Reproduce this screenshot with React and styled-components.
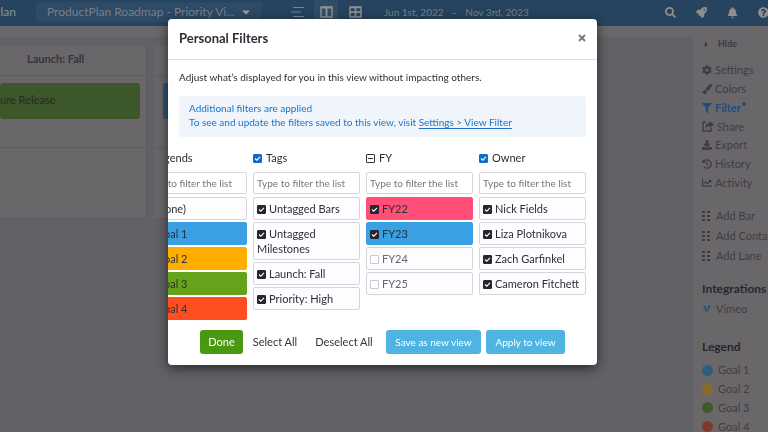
import React from "react";
import styled, { createGlobalStyle } from "styled-components";
import {
  FaSearch, FaRocket, FaBell, FaQuestionCircle, FaCog, FaPaintBrush, FaFilter,
  FaDownload, FaHistory, FaChartLine, FaCaretRight, FaCaretDown, FaVimeoV,
} from "react-icons/fa";

const Global = createGlobalStyle`
  * { box-sizing: border-box; }
  html, body, #root { height: 100%; }
  body { margin: 0; overflow: hidden; font-family: Lato, "Open Sans", sans-serif; font-size: 11px; line-height: 14px; color: #2d2f36; }
  button, input { font: inherit; color: inherit; }
  button { border: 0; background: none; padding: 0; cursor: pointer; }
  h1, h2, p, ul { margin: 0; padding: 0; font-size: inherit; }
  ul { list-style: none; }
`;
const Page = styled.div`
  height: 100%;
  display: flex;
  flex-direction: column;
  background: #6a676a;
  color: #35343a;
`;
const TopBar = styled.header`
  flex: none;
  height: 26px;
  padding-bottom: 2px;
  display: flex;
  align-items: center;
  background: #26435f;
  color: #77818a;
`;
const Brand = styled.a`
  width: 36px;
  padding-right: 20px;
  display: flex;
  justify-content: flex-end;
  color: #8b9197;
  text-decoration: none;
  font-size: 12px;
`;
const RoadmapPicker = styled.button`
  width: 226px;
  height: 20px;
  padding: 0 10px 0 11px;
  display: flex;
  align-items: center;
  justify-content: space-between;
  background: #2d4a66;
  border-radius: 2px;
  font-size: 12px;
  white-space: nowrap;
  svg { color: #9a9c9e; }
`;
const Views = styled.nav`
  display: flex;
  margin-left: 23px;
  gap: 5px;
`;
const ViewButton = styled.button`
  width: 24px;
  height: 24px;
  display: grid;
  place-items: center;
  border-radius: 2px;
  background: ${(p) => (p.$on ? "#304d68" : "transparent")};
`;
const Dates = styled.div`
  margin-left: 17px;
  display: flex;
  gap: 8px;
  font-size: 10px;
`;
const Tools = styled.div`
  margin-left: auto;
  display: flex;
  gap: 20px;
  margin-right: -1px;
  color: #918e8d;
`;
const IconButton = styled.button`
  display: flex;
`;
const Body = styled.div`
  flex: 1;
  min-height: 0;
  display: flex;
`;
const Canvas = styled.main`
  flex: 1;
  margin-top: 11px;
  padding-top: 9px;
  background: #626166;
  border-top-right-radius: 3px;
  display: flex;
  align-items: flex-start;
  gap: 8px;
`;
const Lane = styled.section`
  flex: 0 0 147px;
  background: #6a676a;
  border-right: 1px solid #5a595f;
`;
const LaneTitle = styled.h2`
  height: 30px;
  border-bottom: 1px solid #5e5d63;
  padding: 6px 0 0 27px;
  font-weight: 700;
`;
const LaneBody = styled.div`
  height: ${(p) => p.$height};
  padding-top: 7px;
  border-bottom: 1px solid #5e5d63;
`;
const Bar = styled.div`
  margin: 0 6px 0 ${(p) => p.$left || "0"};
  height: 36px;
  padding-top: 10px;
  border-radius: 3px;
  background: ${(p) => p.$color};
  color: #252c20;
`;
const Sidebar = styled.aside`
  width: 75px;
  padding: 11px 0 0 9px;
  display: flex;
  flex-direction: column;
  white-space: nowrap;
  overflow: hidden;
`;
const SideRow = styled.button`
  flex: 1;
  display: flex;
  align-items: center;
  gap: ${(p) => p.$gap || "3px"};
  font-weight: ${(p) => (p.$active ? 700 : 400)};
  color: ${(p) => (p.$active ? "#1f4e7c" : "#3f3d42")};
  svg { flex: none; }
`;
const HideButton = styled.button`
  height: 14px;
  display: flex;
  align-items: center;
  gap: 7px;
  font-size: 9px;
  font-weight: 700;
  color: #3c3a3f;
`;
const SideTitle = styled.h2`
  margin-top: ${(p) => p.$top};
  font-size: 12px;
  font-weight: 700;
  color: #27262b;
`;
const SideGroup = styled.div`
  flex: none;
  height: ${(p) => p.$height};
  margin-top: ${(p) => p.$top};
  display: flex;
  flex-direction: column;
`;
const Notice = styled.sup`
  width: 4px;
  height: 4px;
  margin: 0 0 7px -2px;
  border-radius: 50%;
  background: #1f4e7c;
`;
const Swatch = styled.i`
  width: 11px;
  height: 11px;
  border-radius: 50%;
  background: ${(p) => p.$color};
`;
const Overlay = styled.div`
  position: fixed;
  inset: 0;
  padding-top: 19px;
  display: flex;
  justify-content: center;
  align-items: flex-start;
`;
const Dialog = styled.div`
  width: 429px;
  margin-right: 3px;
  background: #fff;
  border-radius: 4px;
  overflow: hidden;
  box-shadow: 0 3px 12px rgba(0, 0, 0, 0.6);
`;
const DialogHead = styled.header`
  height: 41px;
  padding: 0 11px 2px;
  display: flex;
  align-items: center;
  justify-content: space-between;
  border-bottom: 1px solid #dddfe5;
`;
const DialogTitle = styled.h1`
  font-size: 13px;
  font-weight: 700;
`;
const Close = styled.button`
  display: flex;
  color: #77777b;
`;
const Intro = styled.p`
  padding: 10px 11px 12px;
  font-size: 10px;
`;
const Alert = styled.div`
  margin: 0 11px;
  padding: 5px 10px 8px;
  background: #f0f4fb;
  border-radius: 2px;
  font-size: 10px;
  color: #1d73c8;
  a { color: inherit; text-underline-offset: 2px; }
`;
const Columns = styled.div`
  height: 184px;
  margin-right: 11px;
  padding-top: 14px;
  display: flex;
  justify-content: flex-end;
  gap: 6px;
`;
const Column = styled.section`
  flex: 0 0 107px;
  display: flex;
  flex-direction: column;
  gap: 3px;
`;
const CheckLabel = styled.label`
  display: block;
  height: ${(p) => p.$height || "auto"};
`;
const Tick = styled.input`
  appearance: none;
  width: 9px;
  height: 9px;
  margin: 0 ${(p) => (p.$blue ? "4px" : "3px")} 0 0;
  vertical-align: -1px;
  border: 1px solid #c9cad1;
  border-radius: 1px;
  background: #fff center / 7px 7px no-repeat;
  &:checked {
    border-color: ${(p) => (p.$blue ? "#0d6ccc" : "#26272e")};
    background-color: ${(p) => (p.$blue ? "#0d6ccc" : "#26272e")};
    background-image: url("data:image/svg+xml,%3Csvg xmlns='http://www.w3.org/2000/svg' viewBox='0 0 7 7'%3E%3Cpath d='M1 3.5 2.8 5.2 6 1.8' fill='none' stroke='white' stroke-width='1.1'/%3E%3C/svg%3E");
  }
  &:indeterminate {
    border-color: #33343b;
    background-image: linear-gradient(#33343b, #33343b);
    background-size: 5px 1px;
  }
`;
const Search = styled.input`
  width: 100%;
  height: 22px;
  padding: 0 3px;
  border: 1px solid #d5d6dd;
  border-radius: 2px;
  background: #fff;
  font-size: 10px;
  &::placeholder { color: #77777d; opacity: 1; }
`;
const Options = styled.ul`
  display: flex;
  flex-direction: column;
  gap: 2px;
`;
const Option = styled.li`
  padding: 3px;
  border: 1px solid ${(p) => p.$color || "#d5d6dd"};
  border-radius: 2px;
  background: ${(p) => p.$color || "#fdfdff"};
  line-height: 15px;
  color: ${(p) => (p.$muted ? "#66666c" : "inherit")};
`;
const Actions = styled.footer`
  height: 44px;
  padding: 9px 0 0 32px;
  display: flex;
  align-items: flex-start;
`;
const Action = styled.button`
  height: 24px;
  width: ${(p) => p.$width};
  margin-left: ${(p) => p.$space || "0"};
  border-radius: 3px;
  white-space: nowrap;
  font-size: ${(p) => (p.$small ? "10px" : "11px")};
  background: ${(p) => p.$color || "transparent"};
  color: ${(p) => (p.$color ? "#fff" : "#33343b")};
`;

const ListIcon = () => (
  <svg width="13" height="10" stroke="#788590" fill="none"><path d="M2 .5h11M0 5h10M2 9.5h11" /></svg>
);
const BoardIcon = () => (
  <svg width="13" height="12" stroke="#918f8c" fill="none"><rect x="1" y="1" width="11" height="10" strokeWidth="1.5" /><path d="M1 1.5h11M6.5 2v9" strokeWidth="2" /></svg>
);
const TableIcon = () => (
  <svg width="13" height="12" stroke="#918f8c" fill="none"><rect x="1" y="1" width="11" height="10" strokeWidth="1.5" /><path d="M1 1.5h11M6.5 2v9M1 6.2h11" strokeWidth="1.7" /></svg>
);
const CloseIcon = () => (
  <svg width="8" height="8" stroke="currentColor" strokeWidth="1.8"><path d="M1 1l6 6M7 1L1 7" /></svg>
);
const ShareIcon = () => (
  <svg width="12" height="11" viewBox="0 0 12 11"><path d="M4 1H1v9h8V7" fill="none" stroke="currentColor" strokeWidth="1.4" /><path d="M7.5 0 12 3.5 7.5 7V5C5 5 4.5 6 4.4 8 2.6 5 4 2.2 7.5 2.2z" fill="currentColor" /></svg>
);
const GripIcon = () => (
  <svg width="8" height="10" fill="currentColor">
    {[0, 4, 8].map((y) => [0, 5].map((x) => <rect key={x + "-" + y} x={x} y={y} width="3" height="2" />))}
  </svg>
);

const setMixed = (mixed) => (el) => { if (el) el.indeterminate = !!mixed; };
const groups = [
  { name: "Legends", items: [["(none)"], ["Goal 1", "#38a0e3"], ["Goal 2", "#ffae00"], ["Goal 3", "#65a31b"], ["Goal 4", "#ff4e1f"]] },
  { name: "Tags", items: [["Untagged Bars"], ["Untagged Milestones"], ["Launch: Fall"], ["Priority: High"]] },
  { name: "FY", mixed: true, items: [["FY22", "#ff4e78"], ["FY23", "#38a0e3"], ["FY24", null, true], ["FY25", null, true]] },
  { name: "Owner", items: [["Nick Fields"], ["Liza Plotnikova"], ["Zach Garfinkel"], ["Cameron Fitchett"]] },
];
const menu = [
  [FaCog, "Settings"], [FaPaintBrush, "Colors"], [FaFilter, "Filter"], [ShareIcon, "Share"],
  [FaDownload, "Export"], [FaHistory, "History"], [FaChartLine, "Activity"],
];
const legend = [["Goal 1", "#2f5c7c"], ["Goal 2", "#8a6a24"], ["Goal 3", "#3f5a2b"], ["Goal 4", "#7f3a2c"]];

function FilterColumn({ group }) {
  return (
    <Column>
      <CheckLabel $height="18px">
        <Tick type="checkbox" $blue defaultChecked={!group.mixed} ref={setMixed(group.mixed)} />
        {group.name}
      </CheckLabel>
      <Search type="text" placeholder="Type to filter the list" aria-label={"Filter " + group.name} />
      <Options>
        {group.items.map(([label, color, off]) => (
          <Option key={label} $color={color} $muted={off}>
            <CheckLabel><Tick type="checkbox" defaultChecked={!off} />{label}</CheckLabel>
          </Option>
        ))}
      </Options>
    </Column>
  );
}

export default function App() {
  return (
    <>
      <Global />
      <Page>
        <TopBar>
          <Brand href="#">Plan</Brand>
          <RoadmapPicker>ProductPlan Roadmap - Priority Vi... <FaCaretDown /></RoadmapPicker>
          <Views>
            <ViewButton aria-label="List"><ListIcon /></ViewButton>
            <ViewButton aria-label="Board" $on><BoardIcon /></ViewButton>
            <ViewButton aria-label="Table"><TableIcon /></ViewButton>
          </Views>
          <Dates><span>Jun 1st, 2022</span><span>–</span><span>Nov 3rd, 2023</span></Dates>
          <Tools>
            <IconButton aria-label="Search"><FaSearch /></IconButton>
            <IconButton aria-label="News"><FaRocket /></IconButton>
            <IconButton aria-label="Alerts"><FaBell /></IconButton>
            <IconButton aria-label="Help"><FaQuestionCircle /></IconButton>
          </Tools>
        </TopBar>
        <Body>
          <Canvas>
            <Lane>
              <LaneTitle>Launch: Fall</LaneTitle>
              <LaneBody $height="72px"><Bar $color="#3c5729">ure Release</Bar></LaneBody>
              <LaneBody $height="71px" />
            </Lane>
            <Lane>
              <LaneTitle />
              <LaneBody $height="72px"><Bar $color="#2b5470" $left="8px" /></LaneBody>
              <LaneBody $height="71px" />
            </Lane>
          </Canvas>
          <Sidebar>
            <HideButton><FaCaretRight />Hide</HideButton>
            <SideGroup $top="10px" $height="131px">
              {menu.map(([Icon, label]) => (
                <SideRow key={label} $active={label === "Filter"}>
                  <Icon size={10} />{label}{label === "Filter" && <Notice />}
                </SideRow>
              ))}
            </SideGroup>
            <SideGroup $top="14px" $height="60px">
              {["Add Bar", "Add Container", "Add Lane"].map((t) => (
                <SideRow key={t} $gap="6px"><GripIcon />{t}</SideRow>
              ))}
            </SideGroup>
            <SideTitle $top="16px">Integrations</SideTitle>
            <SideGroup $top="3px" $height="19px">
              <SideRow $gap="5px"><FaVimeoV size={9} color="#255878" />Vimeo</SideRow>
            </SideGroup>
            <SideTitle $top="22px">Legend</SideTitle>
            <SideGroup $top="7px" $height="75px">
              {legend.map(([t, c]) => <SideRow key={t} $gap="5px"><Swatch $color={c} />{t}</SideRow>)}
            </SideGroup>
          </Sidebar>
        </Body>
      </Page>
      <Overlay>
        <Dialog role="dialog" aria-modal="true" aria-labelledby="filters-title">
          <DialogHead><DialogTitle id="filters-title">Personal Filters</DialogTitle><Close aria-label="Close"><CloseIcon /></Close></DialogHead>
          <Intro>Adjust what’s displayed for you in this view without impacting others.</Intro>
          <Alert>
            <p>Additional filters are applied</p>
            <p>To see and update the filters saved to this view, visit <a href="#">Settings &gt; View Filter</a></p>
          </Alert>
          <Columns>{groups.map((g) => <FilterColumn key={g.name} group={g} />)}</Columns>
          <Actions>
            <Action $color="#489810" $width="43px">Done</Action>
            <Action $width="64px">Select All</Action>
            <Action $width="74px">Deselect All</Action>
            <Action $color="#50b4e3" $width="95px" $space="5px" $small>Save as new view</Action>
            <Action $color="#50b4e3" $width="79px" $space="5px" $small>Apply to view</Action>
          </Actions>
        </Dialog>
      </Overlay>
    </>
  );
}
